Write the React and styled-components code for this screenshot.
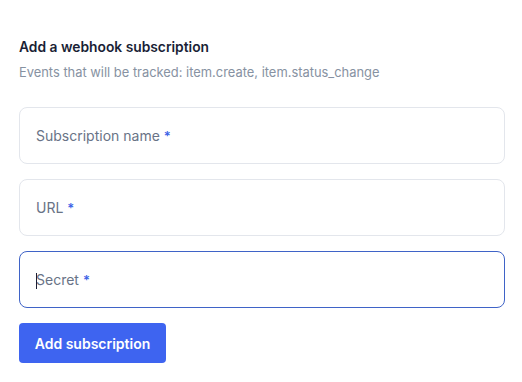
import styled, { createGlobalStyle } from "styled-components";

const Global = createGlobalStyle`
  body {
    margin: 0;
    background: #ffffff;
    font-family: Inter, "Noto Sans", sans-serif;
    -webkit-font-smoothing: antialiased;
  }
`;

const fields = [
  { label: "Subscription name", focused: false },
  { label: "URL", focused: false },
  { label: "Secret", focused: true },
];

const App = () => {
  return (
    <>
      <Global />
      <Wrapper>
        <Title>Add a webhook subscription</Title>
        <Subtitle>Events that will be tracked: item.create, item.status_change</Subtitle>
        <Form>
          {fields.map((f) => (
            <Field key={f.label} $focused={f.focused}>
              {f.focused && <Caret />}
              <Placeholder>{f.label}</Placeholder>
              <Required>*</Required>
            </Field>
          ))}
          <Button type="button">Add subscription</Button>
        </Form>
      </Wrapper>
    </>
  );
};

const Wrapper = styled.div`
  padding: 37px 17px 0 19px;
  width: 486px;
`;

const Title = styled.h2`
  margin: 0;
  font-size: 13.8px;
  line-height: 20px;
  font-weight: 600;
  color: #1a1f36;
`;

const Subtitle = styled.p`
  margin: 6px 0 0;
  font-size: 12.9px;
  line-height: 20px;
  color: #8792a2;
`;

const Form = styled.div`
  margin-top: 24px;
  display: flex;
  flex-direction: column;
  gap: 15px;
`;

const Field = styled.div`
  position: relative;
  box-sizing: border-box;
  height: 57px;
  display: flex;
  align-items: center;
  gap: 4px;
  padding: 0 16px;
  border-radius: 8px;
  border: 1px solid ${(p) => (p.$focused ? "#3f63c7" : "#e3e6ec")};
  background: #fff;
`;

const Caret = styled.span`
  position: absolute;
  left: 16px;
  top: 21px;
  width: 1px;
  height: 16px;
  background: #1a1f36;
`;

const Placeholder = styled.span`
  font-size: 14px;
  color: #697386;
`;

const Required = styled.span`
  font-size: 13px;
  font-weight: 600;
  color: #3d63e6;
`;

const Button = styled.button`
  align-self: flex-start;
  height: 40px;
  width: 147px;
  border: none;
  border-radius: 4px;
  background: #3e64f0;
  color: #fff;
  font-family: Inter, "Noto Sans", sans-serif;
  font-size: 14px;
  font-weight: 600;
  cursor: pointer;
`;

export default App;
